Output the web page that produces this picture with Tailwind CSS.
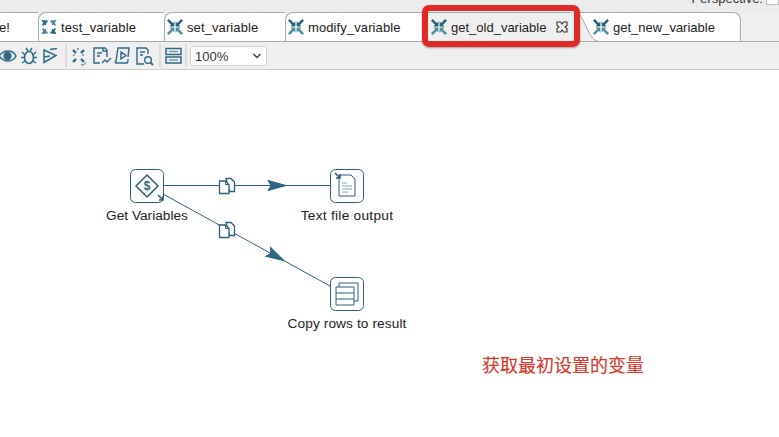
<!DOCTYPE html>
<html lang="en">
<head>
<meta charset="utf-8"/>
<title>get_old_variable</title>
<script src="https://cdn.jsdelivr.net/npm/@tailwindcss/browser@4"></script>
</head>
<body class="bg-white font-['Liberation_Sans',sans-serif] text-[13px] text-[#222] overflow-hidden">
<svg class="hidden">
  <symbol id="trans" viewBox="0 0 18 18">
    <g fill="#245f7c" stroke="#245f7c" stroke-width="2.800">
      <path d="M1 1l5 5" /><path d="M17 1l-5 5"/>
      <path d="M8.300 8.300V2.800L2.800 8.300z" stroke="none"/><path d="M9.700 8.300V2.800l5.500 5.500z" stroke="none"/>
    </g>
    <g fill="#4f8f9c" stroke="#4f8f9c" stroke-width="2.800">
      <path d="M1 17l5-5"/><path d="M17 17l-5-5"/>
      <path d="M8.300 9.700v5.500L2.800 9.700z" stroke="none"/><path d="M9.700 9.700v5.500l5.500-5.500z" stroke="none"/>
    </g>
  </symbol>
  <symbol id="hop" viewBox="0 0 18 18">
    <path d="M8 1.500h5l3.500 3.500v9.500h-5z" fill="#fff" stroke="#2c5f78" stroke-width="1.300"/>
    <path d="M1.500 4h6l3.500 3.500v9h-9.500z" fill="#fff" stroke="#2c5f78" stroke-width="1.300"/>
    <path d="M7.500 4v3.500H11" fill="none" stroke="#2c5f78"/>
  </symbol>
</svg>
<div class="relative w-[779px] h-[437px] overflow-hidden">
  <!-- top strip -->
  <div class="h-[12px] bg-[#ececec] flex justify-end overflow-hidden">
    <span class="mt-[-9px] text-[#333] mr-[3px] leading-[15px]">Perspective:</span>
    <span class="w-[13px] h-[6px] bg-white border border-[#bbb] -mt-px"></span>
  </div>
  <!-- tabs -->
  <div class="h-[30px] flex bg-[#efefef] border-b border-[#a9a9a9]">
    <div class="w-[38px] bg-white border-t border-[#a9a9a9] flex items-center h-[29px]"><span class="-ml-[1px] mt-[2px]">e!</span></div>
    <div class="w-[126px] h-[29px] bg-white border-t border-l border-[#a9a9a9] rounded-tl-[8px] flex items-center pl-[1px] gap-[3px]">
      <svg class="w-[18px] h-[18px]" viewBox="0 0 18 18" fill="none" stroke-width="2">
        <path d="M3 7.500A6.500 6.500 0 0 1 7.500 3" stroke="#2c6a86"/><path d="M2 2.500l4 .5-.5 4z" fill="#2c6a86" stroke="#2c6a86" stroke-width="1"/>
        <path d="M10.500 3A6.500 6.500 0 0 1 15 7.500" stroke="#4d8a96"/><path d="M16 2.500l-4 .5.500 4z" fill="#4d8a96" stroke="#4d8a96" stroke-width="1"/>
        <path d="M3 10.500A6.500 6.500 0 0 0 7.500 15" stroke="#4d8a96"/><path d="M2 15.500l4-.5-.5-4z" fill="#4d8a96" stroke="#4d8a96" stroke-width="1"/>
        <path d="M10.500 15A6.500 6.500 0 0 0 15 10.500" stroke="#2c6a86"/><path d="M16 15.500l-4-.5.500-4z" fill="#2c6a86" stroke="#2c6a86" stroke-width="1"/>
      </svg>
      <span class="mt-[1px] tracking-[0.1px]">test_variable</span>
    </div>
    <div class="w-[121px] h-[29px] bg-white border-t border-l border-[#a9a9a9] rounded-tl-[8px] flex items-center pl-[2px] gap-[4px]">
      <svg class="w-[16px] h-[16px]"><use href="#trans"/></svg><span class="mt-[1px] tracking-[0.1px]">set_variable</span>
    </div>
    <div class="w-[140px] h-[29px] bg-white border-t border-l border-[#a9a9a9] rounded-tl-[8px] flex items-center pl-[2px] gap-[4px]">
      <svg class="w-[16px] h-[16px]"><use href="#trans"/></svg><span class="mt-[1px] tracking-[0.1px]">modify_variable</span>
    </div>
    <div class="w-[155px] h-[29px] bg-[#efefef] border-t border-[#a9a9a9] flex items-center pl-[6px] gap-[4px]">
      <svg class="w-[16px] h-[16px]"><use href="#trans"/></svg><span class="mt-[1px]">get_old_variable</span>
      <svg class="w-[12px] h-[12px] ml-[6px]" viewBox="0 0 12 12" fill="none" stroke="#333" stroke-width="1.100"><path d="M1 1h3.500L6 3l1.500-2H11v3.500L9 6l2 1.500V11H7.500L6 9l-1.500 2H1V7.500L3 6 1 4.500z"/></svg>
    </div>
    <div class="w-[161px] h-[29px] bg-white border-t border-r border-[#a9a9a9] rounded-tr-[8px] flex items-center pl-[13px] gap-[4px]">
      <svg class="w-[16px] h-[16px]"><use href="#trans"/></svg><span class="mt-[1px]">get_new_variable</span>
    </div>
  </div>
  <!-- toolbar -->
  <div class="h-[28px] bg-[#efefef] border-b border-[#cfcfcf] flex items-center">
    <svg class="w-[190px] h-[27px] shrink-0" viewBox="0 0 190 27" fill="none" stroke="#2c6a86" stroke-width="1.400">
      <path d="M-1 14c3-4 6-5 9-5s6 1 8 5c-2 4-5 5-8 5s-6-1-9-5z" stroke-width="1.600"/><circle cx="7.500" cy="14" r="3.500" fill="#2c6a86"/>
      <ellipse cx="29" cy="15.500" rx="4.500" ry="6" stroke-width="1.600"/><path d="M26 6l2 3M32 6l-2 3M22 10l3 3M22 21l3-2M36 10l-3 3M36 21l-3-2M21 15.500h4M33 15.500h4"/>
      <path d="M44 8l12 5.500-12 7zM50 7.500l7-1M44 15l6-1" stroke-width="1.500"/>
      <path d="M66 2v23" stroke="#d5d5d5"/>
      <path d="M73 8l3 3M84 8l-3 3M73 20l3-3M81 17l3 3" stroke-width="2.400"/><path d="M73 13h2M82 13h2M78 6v2" stroke-width="1.200"/><path d="M81 22l2 1.500 3-3" stroke-width="1"/>
      <path d="M107 15v-7l-2-2H94v15h6M103 6v3h4M97 11h5M97 14h3M102 21l3-3 2 2 4-4"/>
      <path d="M119 21h-3c-1 0-1-2 0-2l2-13h11l-1 9M119 21h8c1 0 1-3 1-4M121 10l5 3.500-5 3.500z"/>
      <path d="M148 12V8l-2-2h-9v16h7M140 10h5M140 13h3"/><circle cx="148" cy="18" r="3.300"/><path d="M150.500 20.500l2.500 2.500" stroke-width="2"/>
      <path d="M160 2v23" stroke="#d5d5d5"/>
      <path d="M166 6.500h15v6h-15zM166 15h15v6h-15z" stroke-width="1.500"/><path d="M169 9.500h9M169 18h9" stroke="#6f9bae" stroke-width="1.500"/>
      <path d="M186 2v23" stroke="#d5d5d5"/>
    </svg>
    <div class="w-[77px] h-[20px] bg-white border border-[#d4d4d4] rounded-[3px] flex items-center justify-between pl-[4px] pr-[4px]">
      <span class="text-[#333] mt-[2px]">100%</span>
      <svg class="w-[10px] h-[6px]" viewBox="0 0 10 6" fill="none" stroke="#444" stroke-width="1.500"><path d="M1.500 1l3.500 3.500L8.500 1"/></svg>
    </div>
  </div>
  <!-- curve between the active tab and the next one -->
  <svg class="absolute left-[570px] top-[12px] w-[40px] h-[30px]" viewBox="0 0 40 30" fill="#efefef" stroke="#a9a9a9">
    <path d="M0 0.500h6c8 1 12 28 22 28.500H0z" stroke="none"/><path d="M6 0.500c8 1 12 28 22 28.500" fill="none"/>
  </svg>
  <!-- red highlight -->
  <div class="absolute left-[422px] top-[5px] w-[158px] h-[42px] border-[6px] border-[#e02a26] rounded-[7px] shadow-[0_1px_2px_rgba(0,0,0,0.35)]"></div>
  <!-- canvas -->
  <svg class="absolute left-0 top-0 w-[779px] h-[437px]" viewBox="0 0 779 437" fill="none" stroke="#2c5f78">
    <path d="M163 185.500H330"/><path d="M163 194L330 286"/>
    <path d="M286 185.500l-18-5 3 5-3 5z" fill="#2c6a86"/>
    <path d="M284 260.700l-18-5 3 5-3 5z" fill="#2c6a86" transform="rotate(29 284 260.700)"/>
    <use href="#hop" x="218" y="177" width="18" height="18" />
    <use href="#hop" x="218" y="221" width="18" height="18" />
    <rect x="130.500" y="169.500" width="33" height="33" rx="5" fill="#fff"/>
    <path d="M147 175l11 11-11 11-11-11z" stroke-width="1.500"/>
    <path d="M158 195l5 5M163 196v4h-4" stroke-width="1.500"/>
    <rect x="330.500" y="169.500" width="33" height="33" rx="5" fill="#fff"/>
    <path d="M335 173l5 5M340 174v4h-4" stroke-width="1.500"/>
    <path d="M339 180v-5h12l4 4v17h-16z"/><path d="M342 183h5M342 186h10M342 189h10M342 192h6" stroke="#7fa3b3"/>
    <rect x="330.500" y="277.500" width="33" height="33" rx="5" fill="#fff"/>
    <path d="M339 287v-4h19v18h-4"/><path d="M336 287h18v18h-18zM336 293h18M336 299h18"/>
  </svg>
  <div class="absolute left-[137px] top-[176px] w-[20px] text-center text-[12px] font-bold leading-[20px] text-[#2c5f78]">$</div>
  <div class="absolute left-[87px] top-[208px] w-[120px] text-center leading-[16px] text-[13.700px]">Get Variables</div>
  <div class="absolute left-[287px] top-[208px] w-[120px] text-center leading-[16px] text-[13.700px] tracking-[0.27px]">Text file output</div>
  <div class="absolute left-[277px] top-[316px] w-[140px] text-center leading-[16px] text-[13.700px] tracking-[0.1px]">Copy rows to result</div>
  <div class="absolute left-[482px] top-[352px] text-[18px] leading-[24px] text-[#d8362e] font-['Noto_Sans_CJK_SC',sans-serif] [-webkit-text-stroke:0.15px_#d8362e]">获取最初设置的变量</div>
</div>
</body>
</html>
